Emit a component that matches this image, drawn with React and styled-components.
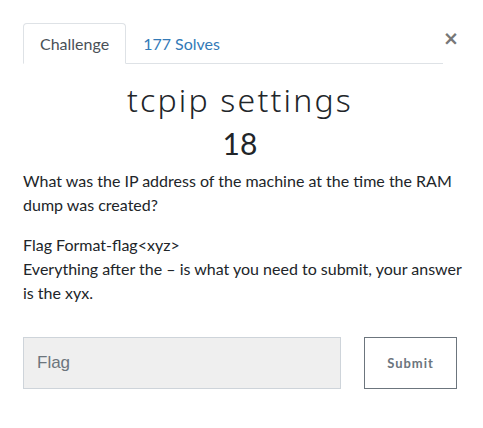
import React from "react";
import styled, { createGlobalStyle } from "styled-components";

const Global = createGlobalStyle`
  html, body { margin: 0; padding: 0; background: #fff; }
  body { font-family: Lato, "Noto Sans", sans-serif; color: #212529; }
  * { box-sizing: border-box; }
`;

const Modal = styled.div`
  width: 483px;
  height: 428px;
  padding: 23px 26px 0 23px;
`;

const Header = styled.div`
  display: flex;
  align-items: flex-start;
`;

const Nav = styled.div`
  display: flex;
  width: 420px;
  border-bottom: 1px solid #dee2e6;
`;

const Tab = styled.div`
  padding: 0 16px;
  height: 41px;
  display: flex;
  align-items: center;
  font-size: 16px;
  margin-bottom: -1px;
  border: 1px solid ${(p) => (p.$active ? "#dee2e6" : "transparent")};
  border-bottom-color: ${(p) => (p.$active ? "#fff" : "transparent")};
  border-radius: 4px 4px 0 0;
  background: ${(p) => (p.$active ? "#fff" : "transparent")};
  color: ${(p) => (p.$active ? "#495057" : "#337ab7")};
`;

const Close = styled.div`
  margin-left: 0px;
  margin-top: 4px;
  width: 13px;
  font-family: "DejaVu Sans", sans-serif;
  font-size: 19px;
  font-weight: bold;
  line-height: 22px;
  color: #777;
  text-align: center;
`;

const Title = styled.h2`
  margin: 17px 0 0;
  text-align: center;
  font-family: "Noto Sans", Lato, sans-serif;
  font-weight: 300;
  font-size: 32px;
  letter-spacing: 2.2px;
  line-height: 38px;
  color: #212529;
`;

const Value = styled.h3`
  margin: 6px 0 8px;
  text-align: center;
  font-weight: 400;
  font-size: 30px;
  line-height: 36px;
  color: #212529;
`;

const Desc = styled.div`
  font-size: 16px;
  line-height: 24px;
  width: 445px;
  p { margin: 0 0 16px; }
`;

const Form = styled.div`
  display: flex;
  gap: 23px;
  margin-top: 32px;
`;

const Input = styled.input`
  width: 318px;
  height: 52px;
  background: #efefef;
  border: 1px solid #ced4da;
  border-radius: 0;
  padding: 0 13px;
  font-family: "Liberation Sans", Arial, sans-serif;
  font-size: 17px;
  color: #495057;
  outline: none;
  &::placeholder { color: #6c757d; }
`;

const Button = styled.button`
  width: 93px;
  height: 52px;
  background: #fff;
  border: 1px solid #6c757d;
  border-radius: 0;
  font-family: Lato, sans-serif;
  font-weight: 700;
  font-size: 13px;
  letter-spacing: 1px;
  color: #6c757d;
  padding: 0;
`;

export default function App() {
  return (
    <>
      <Global />
      <Modal>
        <Header>
          <Nav>
            <Tab $active>Challenge</Tab>
            <Tab>177 Solves</Tab>
          </Nav>
          <Close>×</Close>
        </Header>
        <Title>tcpip settings</Title>
        <Value>18</Value>
        <Desc>
          <p>What was the IP address of the machine at the time the RAM dump was created?</p>
          <p>
            Flag Format-flag&lt;xyz&gt;
            <br />
            Everything after the – is what you need to submit, your answer is the xyx.
          </p>
        </Desc>
        <Form>
          <Input placeholder="Flag" />
          <Button>Submit</Button>
        </Form>
      </Modal>
    </>
  );
}
